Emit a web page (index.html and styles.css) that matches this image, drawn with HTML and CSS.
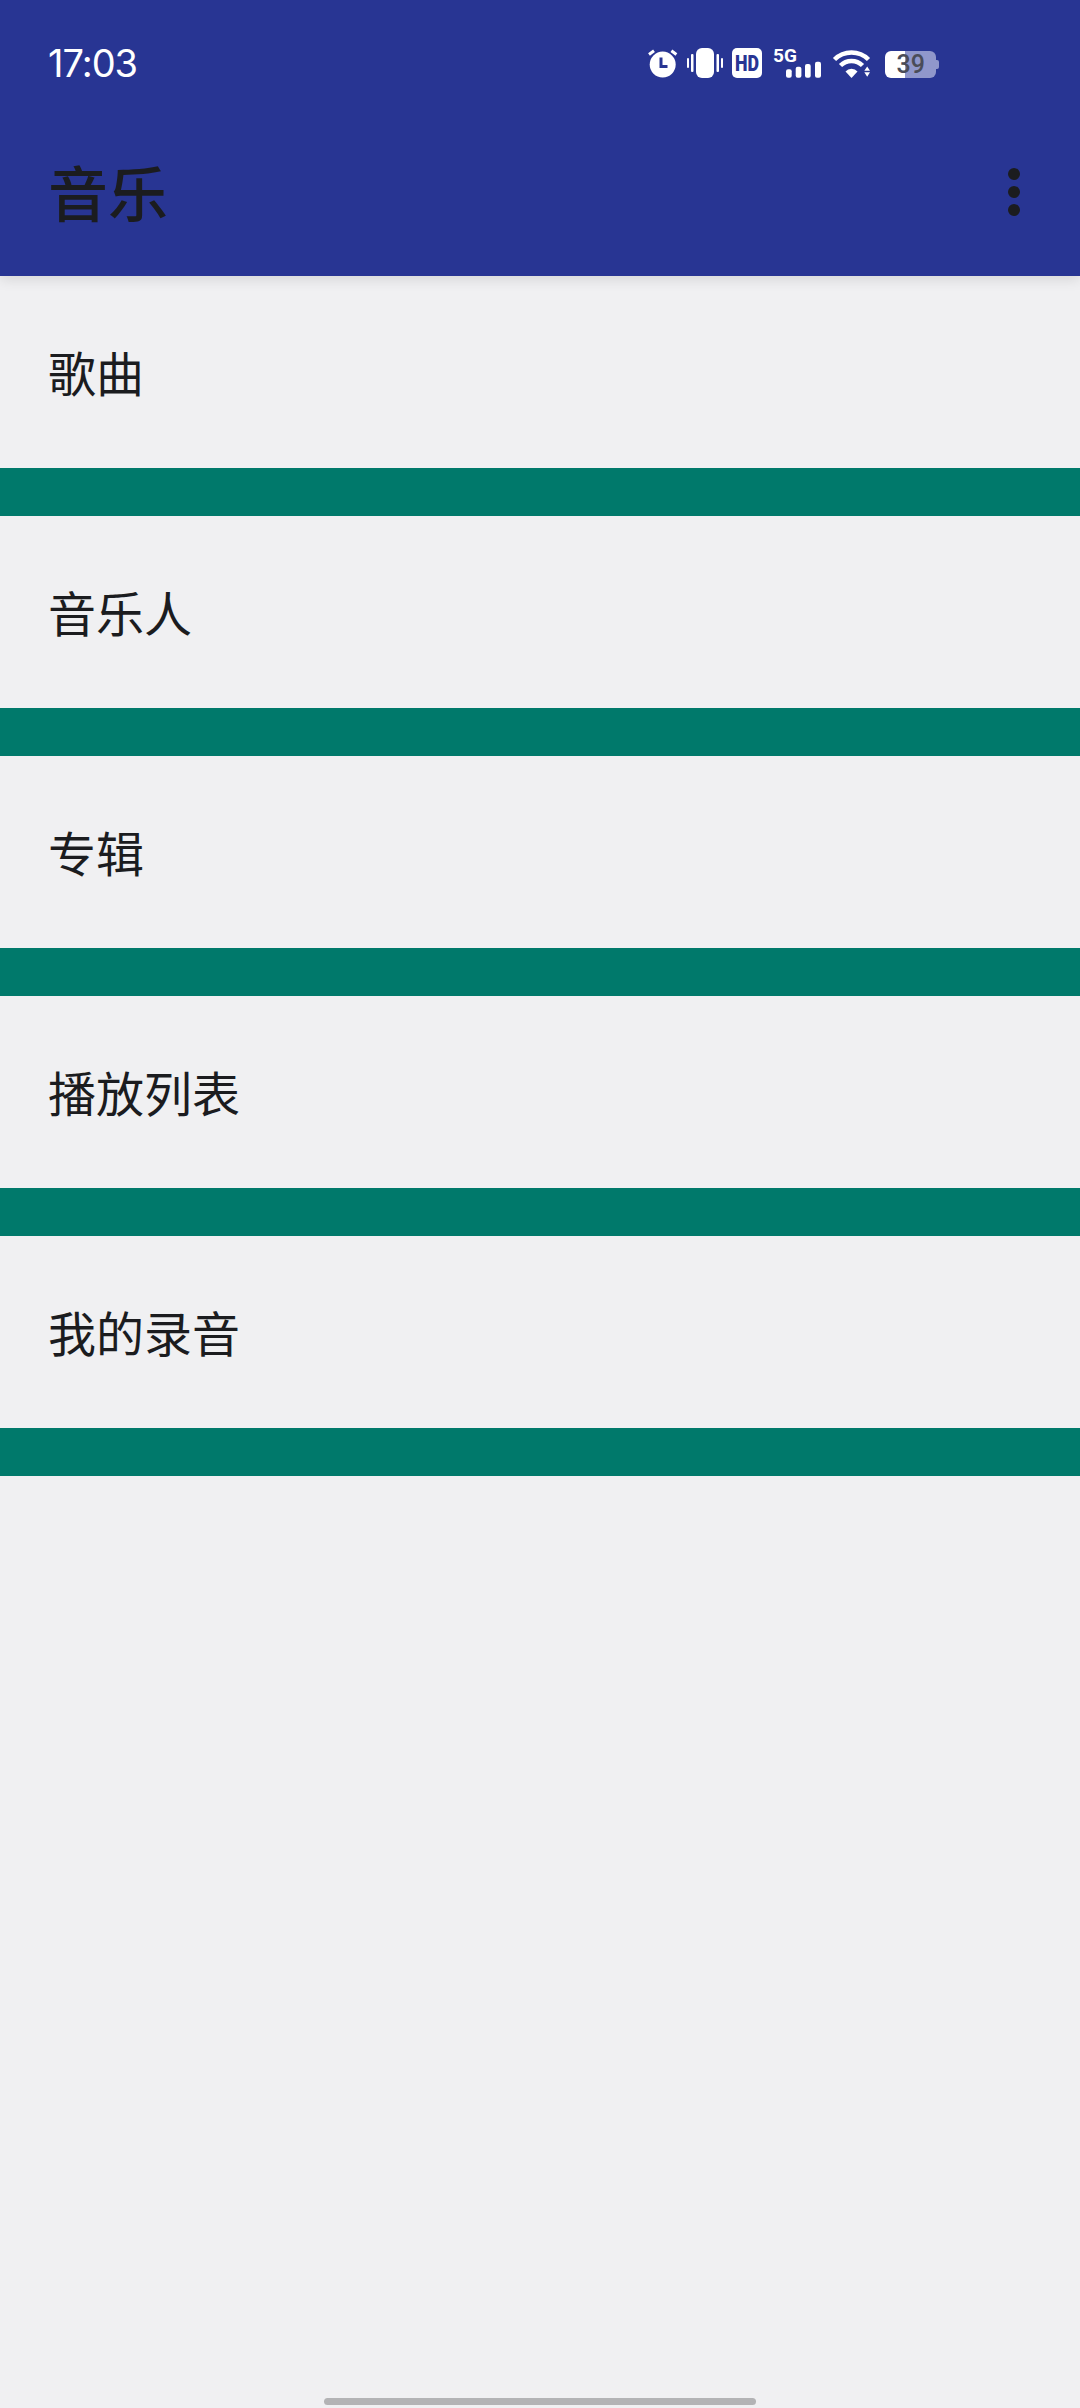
FILE: index.html
```html
<!DOCTYPE html>
<html lang="zh-CN">
<head>
    <meta charset="UTF-8">
    <title>音乐</title>
    <link rel="stylesheet" href="styles.css">
</head>
<body>

<div class="page">
    <div class="app-bar">
        <div class="status-bar">
            <span class="time">17:03</span>
            <div class="status-icons">
                <!-- alarm -->
                <svg class="icon" width="30" height="30" viewBox="0 0 30 30">
                    <circle cx="14.7" cy="16.6" r="13" fill="#fff"/>
                    <path d="M1 6.5 6 2.8M23.4 2.8 28.4 6.5" stroke="#fff" stroke-width="3" fill="none"/>
                    <path d="M13 9.5V18.5H19.5" stroke="#283593" stroke-width="3" fill="none"/>
                </svg>
                <!-- vibrate -->
                <svg class="icon" width="36" height="30" viewBox="0 0 36 30" fill="#fff">
                    <rect x="9" y="0" width="18" height="30" rx="6"/>
                    <rect x="0" y="10" width="2" height="10" rx="1"/>
                    <rect x="4" y="6" width="2.5" height="18" rx="1"/>
                    <rect x="29.5" y="6" width="2.5" height="18" rx="1"/>
                    <rect x="34" y="10" width="2" height="10" rx="1"/>
                </svg>
                <!-- hd -->
                <svg class="icon" width="30" height="30" viewBox="0 0 30 30">
                    <rect width="30" height="30" rx="5" fill="#fff"/>
                    <text class="hd-text" x="15" y="23" text-anchor="middle" textLength="24" lengthAdjust="spacingAndGlyphs">HD</text>
                </svg>
                <!-- 5g signal -->
                <svg class="icon" width="51" height="30" viewBox="0 0 51 30" fill="#fff">
                    <text class="net-text" x="2" y="13.7">5G</text>
                    <rect x="15" y="21.3" width="5.7" height="8.4" rx="2"/>
                    <rect x="24.7" y="18.7" width="5.7" height="11" rx="2"/>
                    <rect x="34" y="16" width="5.7" height="13.7" rx="2"/>
                    <rect x="44" y="13.7" width="6" height="16" rx="2"/>
                </svg>
                <!-- wifi -->
                <svg class="icon" width="40" height="30" viewBox="0 0 40 30">
                    <path d="M3.5 11.5A24 24 0 0 1 37.5 11.5M9.5 17.5A15.5 15.5 0 0 1 31.5 17.5" stroke="#fff" stroke-width="4.5" fill="none"/>
                    <path d="M14.5 23.5A8 8 0 0 1 26.5 23.5L20.5 30z" fill="#fff"/>
                    <path d="M36.2 18.5 39 22.7H33.3zM33.3 24.3H39L36.2 28.7z" fill="#fff"/>
                </svg>
                <!-- battery -->
                <svg class="icon" width="59" height="30" viewBox="0 0 59 30">
                    <path d="M25 3H50a6 6 0 0 1 6 6v15a6 6 0 0 1-6 6H25z" fill="#9097cb"/>
                    <path d="M56 12h1a2 2 0 0 1 2 2v5a2 2 0 0 1-2 2h-1z" fill="#9097cb"/>
                    <path d="M11 3H25V30H11a6 6 0 0 1-6-6V9a6 6 0 0 1 6-6z" fill="#fff"/>
                    <text class="battery-text" x="30.7" y="24.5" text-anchor="middle">39</text>
                </svg>
            </div>
        </div>
        <div class="toolbar">
            <span class="title">音乐</span>
            <div class="more-btn">
                <i class="dot"></i>
                <i class="dot"></i>
                <i class="dot"></i>
            </div>
        </div>
    </div>

    <div class="list">
        <div class="list-item">歌曲</div>
        <div class="divider"></div>
        <div class="list-item">音乐人</div>
        <div class="divider"></div>
        <div class="list-item">专辑</div>
        <div class="divider"></div>
        <div class="list-item">播放列表</div>
        <div class="divider"></div>
        <div class="list-item">我的录音</div>
        <div class="divider"></div>
    </div>

    <div class="home-bar"></div>
</div>

</body>
</html>
```

FILE: styles.css
```css
html, body {
    margin: 0;
    padding: 0;
}
body {
    background-color: #f0f0f2;
    font-family: "Noto Sans CJK SC", Roboto, sans-serif;
    color: #1b1c1f;
}
.page {
    width: 1080px;
    height: 2408px;
    display: flex;
    flex-direction: column;
    overflow: hidden;
}
.app-bar {
    height: 276px;
    flex-shrink: 0;
    background-color: #283593;
    box-shadow: 0 4px 12px rgba(0,0,0,0.1);
    position: relative;
}
.status-bar {
    box-sizing: border-box;
    height: 108px;
    padding: 18px 141px 0 48px;
    display: flex;
    align-items: center;
    justify-content: space-between;
}
.time {
    font-family: Inter, Roboto, sans-serif;
    font-size: 38px;
    letter-spacing: -1px;
    color: #fff;
}
.status-icons {
    display: flex;
    align-items: center;
    gap: 9px;
}
.icon {
    display: block;
    overflow: visible;
}
.hd-text {
    font-family: Roboto, sans-serif;
    font-weight: 900;
    font-size: 22px;
    fill: #283593;
}
.net-text {
    font-family: Roboto, sans-serif;
    font-weight: 700;
    font-size: 19px;
    fill: #fff;
}
.battery-text {
    font-family: Roboto, sans-serif;
    font-weight: 500;
    font-size: 25px;
    fill: #4a4c58;
}
.toolbar {
    box-sizing: border-box;
    height: 168px;
    padding: 0 60px 2px 48px;
    display: flex;
    align-items: center;
    justify-content: space-between;
}
.title {
    font-size: 60px;
    line-height: 1;
    font-weight: 500;
}
.more-btn {
    display: flex;
    flex-direction: column;
    gap: 6px;
    margin-bottom: -2px;
}
.dot {
    display: block;
    width: 12px;
    height: 12px;
    border-radius: 50%;
    background-color: #1b1c1f;
}
.list {
    display: flex;
    flex-direction: column;
}
.list-item {
    box-sizing: border-box;
    height: 192px;
    padding: 0 0 3px 48px;
    display: flex;
    align-items: center;
    font-size: 48px;
    line-height: 1;
}
.divider {
    height: 48px;
    background-color: #00796b;
}
.home-bar {
    width: 432px;
    height: 7px;
    margin: auto auto 3px;
    border-radius: 4px;
    background-color: #b3b3b5;
}
```
